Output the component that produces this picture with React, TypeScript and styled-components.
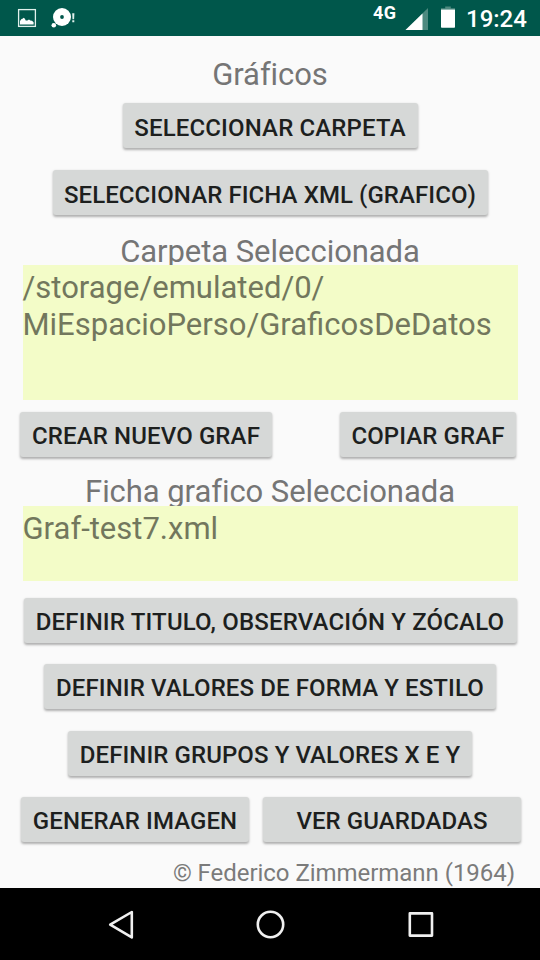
import React from 'react';
import styled, { createGlobalStyle } from 'styled-components';

const GlobalStyle = createGlobalStyle`
  * { box-sizing: border-box; }
  body { margin: 0; background: #fafafa; font-family: Roboto, sans-serif; }
`;

const Screen = styled.div`
  width: 540px;
  height: 960px;
  display: flex;
  flex-direction: column;
  background: #fafafa;
  overflow: hidden;
`;

const StatusBar = styled.header`
  height: 36px;
  flex: none;
  display: flex;
  align-items: flex-start;
  justify-content: space-between;
  background: #00574b;
  color: #fff;
`;

const StatusGroup = styled.div`
  display: flex;
  align-items: flex-start;
`;

const Network = styled.span`
  width: 32px;
  padding-top: 3px;
  font-size: 18px;
  line-height: 20px;
  font-weight: 700;
  letter-spacing: 0.5px;
`;

const Clock = styled.time`
  width: 74px;
  padding-top: 5px;
  font-size: 24px;
  line-height: 28px;
  font-weight: 500;
`;

const Content = styled.main`
  flex: 1;
  min-height: 0;
  display: flex;
  flex-direction: column;
  align-items: center;
`;

const Label = styled.h2<{ $top: number; $height: number }>`
  margin: ${p => p.$top}px 0 0;
  height: ${p => p.$height}px;
  flex: none;
  overflow: hidden;
  font-size: 31px;
  line-height: 37px;
  font-weight: 400;
  letter-spacing: -0.06px;
  color: #757575;
  white-space: nowrap;
`;

const PathField = styled.div<{ $height: number }>`
  width: 495px;
  height: ${p => p.$height}px;
  flex: none;
  padding-top: 4px;
  background: #f3fcc8;
  color: #72775d;
  font-size: 31px;
  line-height: 37px;
  white-space: pre-line;
`;

const ButtonRow = styled.div<{ $top: number; $left?: number; $gap?: number }>`
  display: flex;
  flex: none;
  align-self: ${p => (p.$left ? 'flex-start' : 'center')};
  gap: ${p => p.$gap ?? 0}px;
  margin: ${p => p.$top}px 0 0 ${p => p.$left ?? 0}px;
`;

const Button = styled.button<{ $width: number; $padTop?: number; $spacing?: number }>`
  width: ${p => p.$width}px;
  height: 45px;
  padding: ${p => p.$padTop ?? 2}px 0 0;
  border: 0;
  border-radius: 3px;
  background: #d6d8d7;
  box-shadow: 0 1.5px 2.5px rgba(0, 0, 0, 0.3);
  color: #1d1f1e;
  font: 500 24px/28px Roboto, sans-serif;
  letter-spacing: ${p => p.$spacing ?? 0.08}px;
  white-space: nowrap;
`;

const Credit = styled.footer`
  align-self: flex-end;
  margin: 17px 25px 0 0;
  font-size: 24px;
  line-height: 28px;
  letter-spacing: -0.04px;
  color: #7b7b7b;
  white-space: nowrap;
`;

const NavBar = styled.nav`
  height: 72px;
  flex: none;
  display: flex;
  justify-content: center;
  align-items: center;
  gap: 114px;
  background: #000;
`;

const ImageIcon = () => (
  <svg width="50" height="36" viewBox="0 0 50 36">
    <rect x="18.6" y="9.6" width="16.8" height="16.8" fill="none" stroke="#e0f0ec" strokeWidth="1.3" />
    <path d="M20 24.6V21l1.5-2 1-.2 1.2-1.1 1.2 1 .8 1.7 1.6.2 1.7-1.1 1.3 1.1 1.7.2 1.6 1.5v2.3z" fill="#fff" />
  </svg>
);

const DiscIcon = () => (
  <svg width="30" height="36" viewBox="50 0 30 36">
    <circle cx="62" cy="17" r="9" fill="#fff" />
    <circle cx="62" cy="17" r="1.9" fill="#00574b" />
    <circle cx="53.8" cy="25.2" r="2.3" fill="#fff" />
    <path d="M72.2 13.3h2.2l-.3 5.9h-1.6zM72.3 20.3h2v1.9h-2z" fill="#e0f0ec" />
  </svg>
);

const SignalIcon = () => (
  <svg width="36" height="36" viewBox="405 0 36 36">
    <path d="M405.5 30L428 8v22z" fill="#4d897f" />
    <path d="M405.5 30L422.5 13.4V30z" fill="#fff" />
  </svg>
);

const BatteryIcon = () => (
  <svg width="25" height="36" viewBox="441 0 25 36">
    <path d="M441 9.5V8.3h4.2V6.5h5.6v1.8h4.2v1.2z" fill="#4d897f" />
    <path d="M441 9.5h14V27a.8.8 0 0 1-.8.8h-12.4a.8.8 0 0 1-.8-.8z" fill="#fff" />
  </svg>
);

const NavIcon = ({ children }: { children: React.ReactNode }) => (
  <svg width="36" height="36" viewBox="0 0 36 36" fill="none" stroke="#f0f0f0" strokeWidth="2.6" strokeLinejoin="round">
    {children}
  </svg>
);

export default function App() {
  return (
    <>
      <GlobalStyle />
      <Screen>
        <StatusBar>
          <StatusGroup>
            <ImageIcon />
            <DiscIcon />
          </StatusGroup>
          <StatusGroup>
            <Network>4G</Network>
            <SignalIcon />
            <BatteryIcon />
            <Clock>19:24</Clock>
          </StatusGroup>
        </StatusBar>
        <Content>
          <Label as="h1" $top={20} $height={37}>Gráficos</Label>
          <ButtonRow $top={10}>
            <Button $width={295} $padTop={4} $spacing={0.14}>SELECCIONAR CARPETA</Button>
          </ButtonRow>
          <ButtonRow $top={22}>
            <Button $width={435} $padTop={4}>SELECCIONAR FICHA XML (GRAFICO)</Button>
          </ButtonRow>
          <Label $top={18} $height={32}>Carpeta Seleccionada</Label>
          <PathField $height={135}>{'/storage/emulated/0/\nMiEspacioPerso/GraficosDeDatos'}</PathField>
          <ButtonRow $top={12} $left={20} $gap={68}>
            <Button $width={252} $spacing={0.12}>CREAR NUEVO GRAF</Button>
            <Button $width={176}>COPIAR GRAF</Button>
          </ButtonRow>
          <Label $top={16} $height={33}>Ficha grafico Seleccionada</Label>
          <PathField $height={75}>Graf-test7.xml</PathField>
          <ButtonRow $top={17}>
            <Button $width={493} $spacing={0.17}>DEFINIR TITULO, OBSERVACIÓN Y ZÓCALO</Button>
          </ButtonRow>
          <ButtonRow $top={21}>
            <Button $width={452} $spacing={0.1}>DEFINIR VALORES DE FORMA Y ESTILO</Button>
          </ButtonRow>
          <ButtonRow $top={22}>
            <Button $width={404}>DEFINIR GRUPOS Y VALORES X E Y</Button>
          </ButtonRow>
          <ButtonRow $top={21} $left={21} $gap={14}>
            <Button $width={228}>GENERAR IMAGEN</Button>
            <Button $width={258}>VER GUARDADAS</Button>
          </ButtonRow>
          <Credit>© Federico Zimmermann (1964)</Credit>
        </Content>
        <NavBar>
          <NavIcon><path d="M8.2 18.6L29.8 6v25.4z" /></NavIcon>
          <NavIcon><circle cx="18.5" cy="18.5" r="12.7" /></NavIcon>
          <NavIcon><rect x="7.8" y="7.4" width="22.2" height="22.2" /></NavIcon>
        </NavBar>
      </Screen>
    </>
  );
}
